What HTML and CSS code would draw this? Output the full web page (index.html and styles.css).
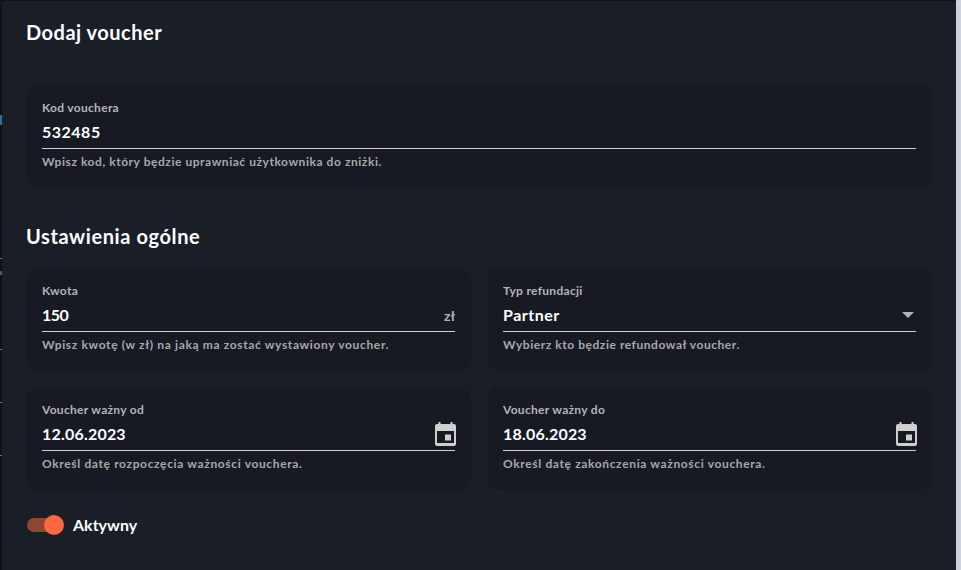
FILE: index.html
```html
<!DOCTYPE html>
<html lang="pl">
<head>
<meta charset="utf-8">
<title>Dodaj voucher</title>
<link rel="stylesheet" href="styles.css">
</head>
<body>
<div class="shell">
  <div class="rail"></div>
  <main class="panel">
    <h2 class="title">Dodaj voucher</h2>
    <section class="card">
      <label class="label">Kod vouchera</label>
      <div class="control"><span class="value">532485</span></div>
      <p class="hint">Wpisz kod, który będzie uprawniać użytkownika do zniżki.</p>
    </section>
    <h2 class="title title-second">Ustawienia ogólne</h2>
    <div class="grid">
      <section class="card">
        <label class="label">Kwota</label>
        <div class="control"><span class="value value-short">150</span><span class="suffix">zł</span></div>
        <p class="hint hint-wide">Wpisz kwotę (w zł) na jaką ma zostać wystawiony voucher.</p>
      </section>
      <section class="card">
        <label class="label">Typ refundacji</label>
        <div class="control"><span class="value">Partner</span><svg class="caret" width="12" height="6" viewBox="0 0 12 6"><path d="M0 0h12L6 6z"/></svg></div>
        <p class="hint">Wybierz kto będzie refundował voucher.</p>
      </section>
      <section class="card">
        <label class="label">Voucher ważny od</label>
        <div class="control"><span class="value value-date">12.06.2023</span><svg class="cal" width="21" height="24" viewBox="0 0 21 24"><path fill-rule="evenodd" d="M3.500 0h2v2h10V0h2v2H19a2 2 0 0 1 2 2v18a2 2 0 0 1-2 2H2a2 2 0 0 1-2-2V4a2 2 0 0 1 2-2h1.500zM2 9v12h17V9zM10 12.500h6v6h-6z"/></svg></div>
        <p class="hint hint-wide">Określ datę rozpoczęcia ważności vouchera.</p>
      </section>
      <section class="card">
        <label class="label">Voucher ważny do</label>
        <div class="control"><span class="value value-date">18.06.2023</span><svg class="cal" width="21" height="24" viewBox="0 0 21 24"><path fill-rule="evenodd" d="M3.500 0h2v2h10V0h2v2H19a2 2 0 0 1 2 2v18a2 2 0 0 1-2 2H2a2 2 0 0 1-2-2V4a2 2 0 0 1 2-2h1.500zM2 9v12h17V9zM10 12.500h6v6h-6z"/></svg></div>
        <p class="hint hint-wide">Określ datę zakończenia ważności vouchera.</p>
      </section>
    </div>
    <div class="switch-row">
      <span class="switch"><span class="track"></span><span class="thumb"></span></span>
      <span class="switch-label">Aktywny</span>
    </div>
  </main>
  <div class="edge"></div>
</div>
</body>
</html>
```
FILE: styles.css
```css
* { box-sizing: border-box; }
html, body { margin: 0; height: 100%; overflow: hidden; }
body { background: #101216; font-family: "Lato", "Liberation Sans", sans-serif; color: #fff; }
.shell { display: flex; height: 570px; }
.rail {
  width: 2px;
  background:
    linear-gradient(#101216 0 115px, #2f6f9a 115px 125px, #101216 125px 258px, #77797d 258px 259px, #101216 259px 271px, #55575b 271px 275px, #101216 275px 349px, #77797d 349px 350px, #101216 350px 402px, #77797d 402px 403px, #101216 403px 455px, #77797d 455px 456px, #101216 456px);
}
.panel { flex: 1; margin-top: 1px; padding: 0 24px; background: #1a1e27; border-top-left-radius: 4px; }
.title { margin: 0; font-size: 20px; line-height: 28px; font-weight: 700; padding-top: 17px; height: 84px; letter-spacing: .5px; }
.title-second { padding-top: 35px; height: 81px; letter-spacing: .6px; }
.card { background: #171a23; border-radius: 12px; padding: 15px 16px 0; height: 102px; }
.grid { display: grid; grid-template-columns: 445px 445px; gap: 16px; }
.grid .card { height: 103px; }
.label { display: block; font-size: 12px; line-height: 16px; color: #b4b4b6; font-weight: 700; letter-spacing: .3px; }
.control { display: flex; align-items: center; justify-content: space-between; height: 33px; border-bottom: 1px solid #cfcfcf; }
.value { font-size: 16px; font-weight: 700; letter-spacing: .5px; color: #fff; padding-bottom: 1px; }
.value-date { letter-spacing: .2px; }
.value-short { letter-spacing: -.5px; }
.suffix { font-size: 14px; font-weight: 700; color: #b4b4b6; }
.caret { fill: #b4b4b6; margin-right: 2px; }
.cal { fill: #cfcfcf; margin-right: -1px; flex: none; }
.hint { margin: 5px 0 0; font-size: 12px; line-height: 16px; color: #a8a8aa; font-weight: 700; letter-spacing: .55px; }
.hint-wide { letter-spacing: .64px; }
.switch-row { display: flex; align-items: center; height: 36px; margin-top: 17px; gap: 9px; }
.switch { position: relative; width: 38px; height: 20px; display: block; }
.track { position: absolute; left: 1px; top: 3px; width: 34px; height: 14px; border-radius: 7px; background: #8f4633; }
.thumb { position: absolute; left: 18px; top: 0; width: 20px; height: 20px; border-radius: 50%; background: #ff6740; }
.switch-label { font-size: 16px; font-weight: 700; padding-bottom: 2px; }
.edge { width: 5px; background: #cdd3dc; }
```
